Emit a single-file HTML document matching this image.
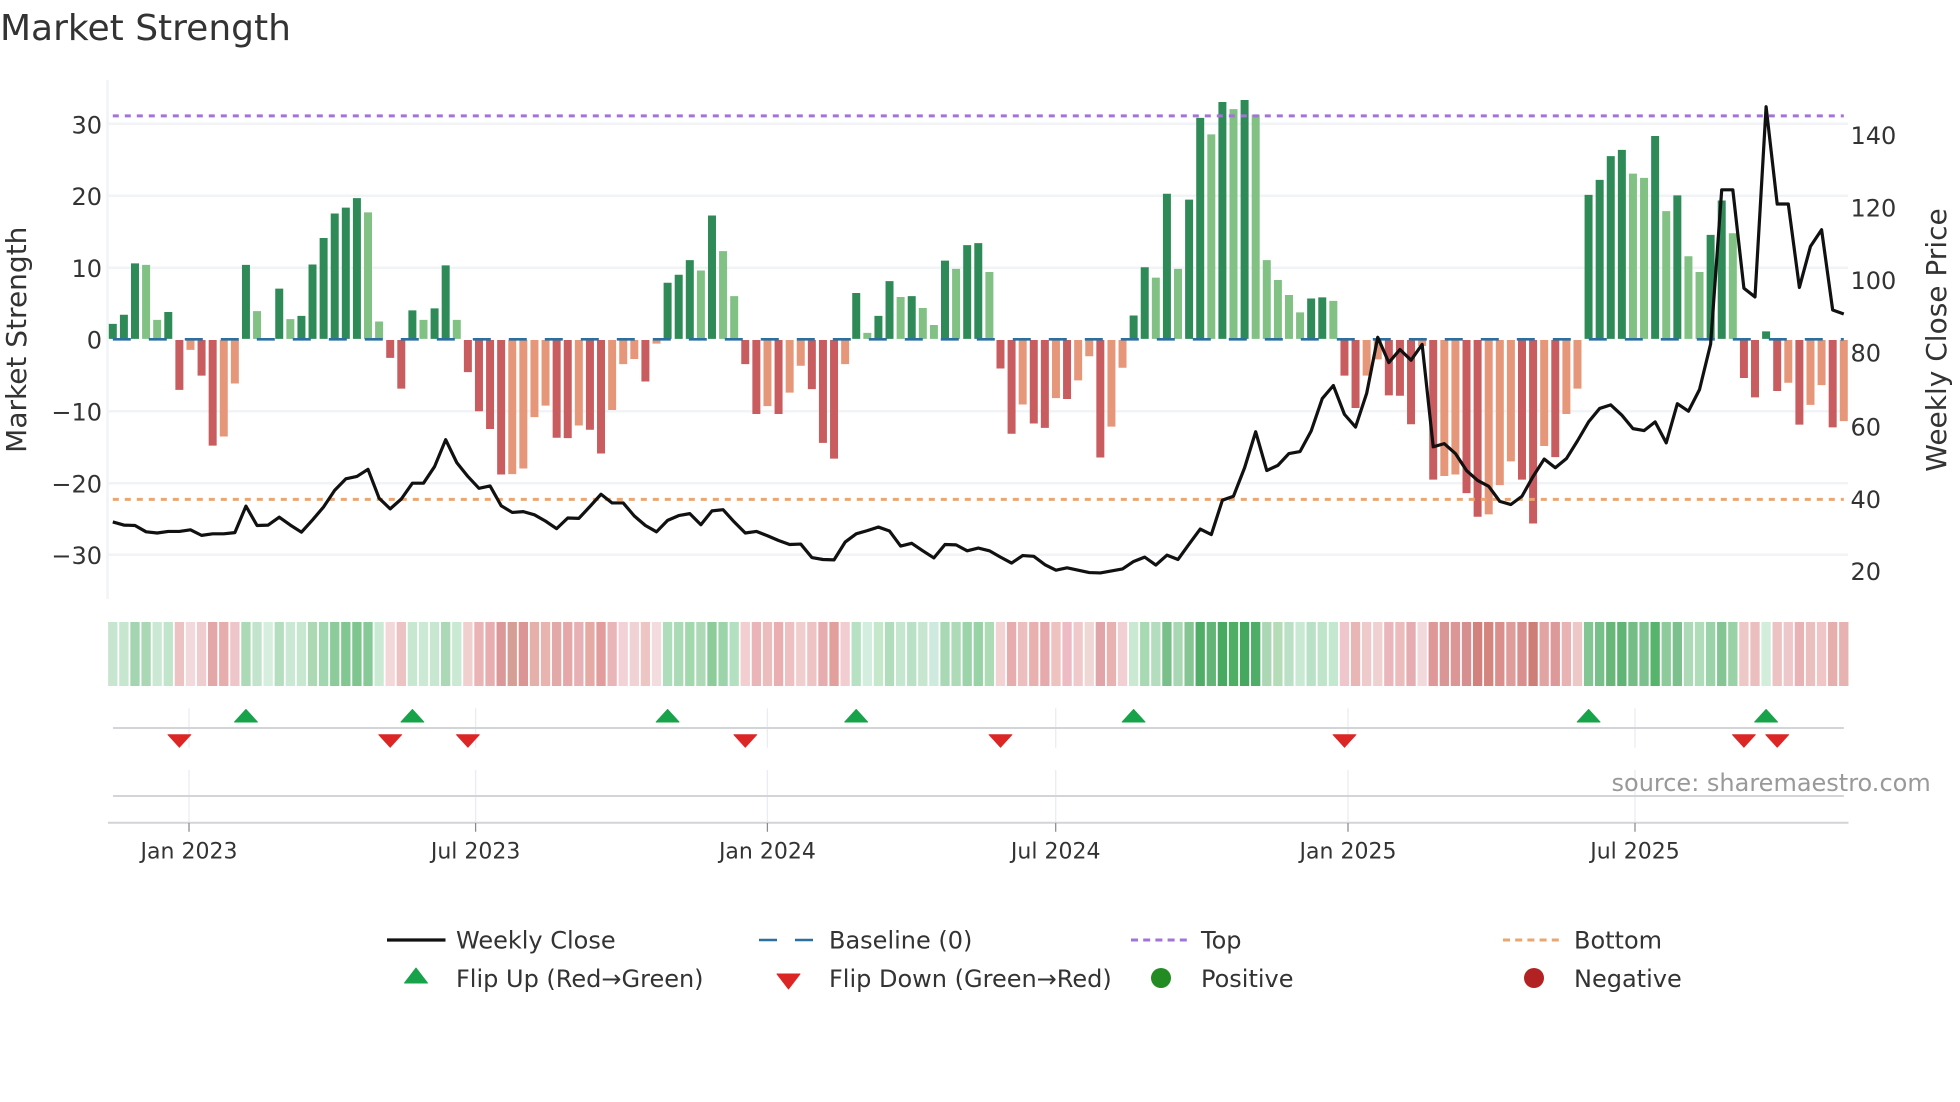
<!DOCTYPE html>
<html><head><meta charset="utf-8"><title>Market Strength</title>
<style>html,body{margin:0;padding:0;background:#fff}svg{display:block}text{font-family:"DejaVu Sans","Liberation Sans",sans-serif;fill:#333}</style></head>
<body>
<svg width="1960" height="1102" viewBox="0 0 1960 1102" xmlns="http://www.w3.org/2000/svg">
<rect width="1960" height="1102" fill="#fff"/>
<text x="0" y="40" font-size="36">Market Strength</text>
<!-- grid -->
<g stroke="#f1f3f6" stroke-width="2.5" fill="none">
<path d="M108 123.8H1848M108 195.7H1848M108 267.7H1848M108 411.2H1848M108 483.2H1848M108 554.8H1848"/>
<path d="M107.5 80V599"/>
</g>
<!-- left ticks -->
<g font-size="24" text-anchor="end">
<text x="102" y="133.3">30</text><text x="102" y="205.2">20</text><text x="102" y="277.2">10</text><text x="102" y="348.4">0</text><text x="102" y="420.3">−10</text><text x="102" y="492.3">−20</text><text x="102" y="563.9">−30</text>
</g>
<g font-size="24">
<text x="1850.5" y="143.9">140</text><text x="1850.5" y="216.3">120</text><text x="1850.5" y="289">100</text><text x="1850.5" y="361.7">80</text><text x="1850.5" y="435.3">60</text><text x="1850.5" y="508.1">40</text><text x="1850.5" y="580.1">20</text>
</g>
<text font-size="28" text-anchor="middle" transform="translate(26 339.7) rotate(-90)">Market Strength</text>
<text font-size="28" text-anchor="middle" transform="translate(1946 340) rotate(-90)">Weekly Close Price</text>
<!-- bars -->
<g transform="translate(112.8 0) scale(11.096 .3954)">
<g transform="translate(-.36 0)">
<path fill="#2e8b57" d="M0 857V819h.72V857zM1 857V796h.72V857zM2 857V666h.72V857zM5 857V789h.72V857zM12 857V670h.72V857zM15 857V730h.72V857zM17 857V799h.72V857zM18 857V669h.72V857zM19 857V602h.72V857zM20 857V540h.72V857zM21 857V525h.72V857zM22 857V501h.72V857zM27 857V785h.72V857zM29 857V780h.72V857zM30 857V671h.72V857zM50 857V715h.72V857zM51 857V695h.72V857zM52 857V658h.72V857zM54 857V545h.72V857zM67 857V741h.72V857zM69 857V799h.72V857zM70 857V711h.72V857zM72 857V749h.72V857zM75 857V659h.72V857zM77 857V620h.72V857zM78 857V615h.72V857zM92 857V798h.72V857zM93 857V676h.72V857zM95 857V490h.72V857zM97 857V505h.72V857zM98 857V298h.72V857zM100 857V258h.72V857zM102 857V253h.72V857zM108 857V755h.72V857zM109 857V752h.72V857zM133 857V493h.72V857zM134 857V455h.72V857zM135 857V395h.72V857zM136 857V379h.72V857zM139 857V344h.72V857zM141 857V494h.72V857zM144 857V594h.72V857zM145 857V507h.72V857zM149 857V838h.72V857z"/>
<path fill="#81c184" d="M3 857V670h.72V857zM4 857V809h.72V857zM13 857V787h.72V857zM16 857V807h.72V857zM23 857V537h.72V857zM24 857V813h.72V857zM28 857V809h.72V857zM31 857V809h.72V857zM53 857V684h.72V857zM55 857V635h.72V857zM56 857V749h.72V857zM68 857V842h.72V857zM71 857V751h.72V857zM73 857V779h.72V857zM74 857V822h.72V857zM76 857V680h.72V857zM79 857V688h.72V857zM94 857V702h.72V857zM96 857V680h.72V857zM99 857V340h.72V857zM101 857V276h.72V857zM103 857V290h.72V857zM104 857V658h.72V857zM105 857V708h.72V857zM106 857V746h.72V857zM107 857V790h.72V857zM110 857V761h.72V857zM137 857V439h.72V857zM138 857V450h.72V857zM140 857V534h.72V857zM142 857V648h.72V857zM143 857V688h.72V857zM146 857V590h.72V857z"/>
<path fill="#c85c5e" d="M6 860V986h.72V860zM8 860V950h.72V860zM9 860V1127h.72V860zM25 860V905h.72V860zM26 860V983h.72V860zM32 860V941h.72V860zM33 860V1040h.72V860zM34 860V1085h.72V860zM35 860V1200h.72V860zM40 860V1107h.72V860zM41 860V1108h.72V860zM43 860V1087h.72V860zM44 860V1147h.72V860zM48 860V965h.72V860zM57 860V921h.72V860zM58 860V1047h.72V860zM60 860V1047h.72V860zM63 860V984h.72V860zM64 860V1120h.72V860zM65 860V1160h.72V860zM80 860V932h.72V860zM81 860V1097h.72V860zM83 860V1071h.72V860zM84 860V1082h.72V860zM86 860V1009h.72V860zM89 860V1157h.72V860zM111 860V950h.72V860zM112 860V1032h.72V860zM115 860V1000h.72V860zM116 860V1001h.72V860zM117 860V1073h.72V860zM119 860V1213h.72V860zM122 860V1247h.72V860zM123 860V1307h.72V860zM127 860V1213h.72V860zM128 860V1324h.72V860zM130 860V1156h.72V860zM147 860V956h.72V860zM148 860V1005h.72V860zM150 860V989h.72V860zM152 860V1074h.72V860zM155 860V1081h.72V860z"/>
<path fill="#e6977a" d="M7 860V885h.72V860zM10 860V1104h.72V860zM11 860V970h.72V860zM36 860V1199h.72V860zM37 860V1185h.72V860zM38 860V1055h.72V860zM39 860V1026h.72V860zM42 860V1076h.72V860zM45 860V1037h.72V860zM46 860V921h.72V860zM47 860V908h.72V860zM49 860V869h.72V860zM59 860V1027h.72V860zM61 860V993h.72V860zM62 860V925h.72V860zM66 860V921h.72V860zM82 860V1023h.72V860zM85 860V1007h.72V860zM87 860V962h.72V860zM88 860V901h.72V860zM90 860V1079h.72V860zM91 860V930h.72V860zM113 860V950h.72V860zM114 860V909h.72V860zM118 860V875h.72V860zM120 860V1204h.72V860zM121 860V1200h.72V860zM124 860V1301h.72V860zM125 860V1227h.72V860zM126 860V1167h.72V860zM129 860V1128h.72V860zM131 860V1047h.72V860zM132 860V983h.72V860zM151 860V968h.72V860zM153 860V1024h.72V860zM154 860V974h.72V860zM156 860V1065h.72V860z"/>
</g>
</g>
<!-- reference lines -->
<path d="M112.8 339.3H1843.8" stroke="#2a6f9f" stroke-width="2.6" stroke-dasharray="18 18" fill="none"/>
<path d="M112.8 115.9H1843.8" stroke="#a273d8" stroke-width="3" stroke-dasharray="6 6" fill="none"/>
<path d="M112.8 499.4H1843.8" stroke="#eba56e" stroke-width="3" stroke-dasharray="6 6" fill="none"/>
<!-- weekly close -->
<g transform="translate(112.8 0) scale(11.096 .3954)">
<polyline fill="none" stroke="#111" stroke-width="3.2" stroke-linejoin="round" vector-effect="non-scaling-stroke" points="0,1320 1,1328 2,1329 3,1345 4,1348 5,1344 6,1344 7,1340 8,1354 9,1350 10,1350 11,1347 12,1280 13,1329 14,1328 15,1308 16,1328 17,1346 18,1315 19,1282 20,1240 21,1211 22,1205 23,1187 24,1260 25,1287 26,1262 27,1222 28,1222 29,1180 30,1112 31,1170 32,1205 33,1235 34,1229 35,1279 36,1296 37,1294 38,1302 39,1318 40,1337 41,1310 42,1311 43,1281 44,1250 45,1272 46,1272 47,1305 48,1329 49,1345 50,1316 51,1304 52,1299 53,1327 54,1292 55,1289 56,1320 57,1348 58,1344 59,1355 60,1367 61,1377 62,1376 63,1410 64,1415 65,1416 66,1371 67,1350 68,1342 69,1333 70,1343 71,1381 72,1374 73,1393 74,1411 75,1377 76,1378 77,1393 78,1386 79,1393 80,1409 81,1424 82,1405 83,1407 84,1428 85,1442 86,1436 87,1442 88,1448 89,1449 90,1444 91,1439 92,1420 93,1409 94,1429 95,1404 96,1415 97,1376 98,1338 99,1352 100,1265 101,1255 102,1183 103,1092 104,1190 105,1177 106,1147 107,1142 108,1090 109,1008 110,975 111,1048 112,1080 113,995 114,853 115,917 116,884 117,911 118,871 119,1130 120,1122 121,1147 122,1190 123,1215 124,1230 125,1268 126,1276 127,1255 128,1205 129,1161 130,1183 131,1160 132,1115 133,1067 134,1033 135,1024 136,1050 137,1084 138,1089 139,1067 140,1120 141,1021 142,1040 143,985 144,870 145,480 146,480 147,729 148,751 149,270 150,516 151,516 152,727 153,623 154,581 155,784 156,794"/>
</g>
<!-- heat strip -->
<g transform="translate(108.14 622) scale(11.096 64)" opacity=".95">
<rect x="0" width=".84" height="1" fill="#c5e4cd"/><rect x="1" width=".84" height="1" fill="#c4e5cd"/><rect x="2" width=".84" height="1" fill="#9fd4ac"/><rect x="3" width=".84" height="1" fill="#a6d5b0"/><rect x="4" width=".84" height="1" fill="#c9e7d2"/><rect x="5" width=".84" height="1" fill="#bee4c9"/><rect x="6" width=".84" height="1" fill="#ecbfc0"/><rect x="7" width=".84" height="1" fill="#f2d8db"/><rect x="8" width=".84" height="1" fill="#efcbcd"/><rect x="9" width=".84" height="1" fill="#e3a3a3"/>
<rect x="10" width=".84" height="1" fill="#e6a9a9"/><rect x="11" width=".84" height="1" fill="#eec4c8"/><rect x="12" width=".84" height="1" fill="#a8d8b3"/><rect x="13" width=".84" height="1" fill="#c0e3ca"/><rect x="14" width=".84" height="1" fill="#d3eedd"/><rect x="15" width=".84" height="1" fill="#b2ddbc"/><rect x="16" width=".84" height="1" fill="#c8e8d2"/><rect x="17" width=".84" height="1" fill="#c6e6cf"/><rect x="18" width=".84" height="1" fill="#a8d6b1"/><rect x="19" width=".84" height="1" fill="#9dd5ab"/>
<rect x="20" width=".84" height="1" fill="#86ca96"/><rect x="21" width=".84" height="1" fill="#7cc48c"/><rect x="22" width=".84" height="1" fill="#78c288"/><rect x="23" width=".84" height="1" fill="#82c892"/><rect x="24" width=".84" height="1" fill="#c9e9d2"/><rect x="25" width=".84" height="1" fill="#f3d6d8"/><rect x="26" width=".84" height="1" fill="#ecbfc0"/><rect x="27" width=".84" height="1" fill="#c5e6cf"/><rect x="28" width=".84" height="1" fill="#c9e8d2"/><rect x="29" width=".84" height="1" fill="#c5e6cf"/>
<rect x="30" width=".84" height="1" fill="#a7d7b2"/><rect x="31" width=".84" height="1" fill="#c7e8d1"/><rect x="32" width=".84" height="1" fill="#f0cdcd"/><rect x="33" width=".84" height="1" fill="#e9b0b0"/><rect x="34" width=".84" height="1" fill="#e6a9ab"/><rect x="35" width=".84" height="1" fill="#da9393"/><rect x="36" width=".84" height="1" fill="#d49a90"/><rect x="37" width=".84" height="1" fill="#db9090"/><rect x="38" width=".84" height="1" fill="#e5aca6"/><rect x="39" width=".84" height="1" fill="#e8b1ac"/>
<rect x="40" width=".84" height="1" fill="#e2a5a5"/><rect x="41" width=".84" height="1" fill="#e4a3a3"/><rect x="42" width=".84" height="1" fill="#e6acb0"/><rect x="43" width=".84" height="1" fill="#e4a6a0"/><rect x="44" width=".84" height="1" fill="#e09796"/><rect x="45" width=".84" height="1" fill="#e8b2b5"/><rect x="46" width=".84" height="1" fill="#f2d0d5"/><rect x="47" width=".84" height="1" fill="#f1d0d2"/><rect x="48" width=".84" height="1" fill="#edc3c0"/><rect x="49" width=".84" height="1" fill="#f3dbdd"/>
<rect x="50" width=".84" height="1" fill="#aadcb8"/><rect x="51" width=".84" height="1" fill="#a7d9b3"/><rect x="52" width=".84" height="1" fill="#9cd6a8"/><rect x="53" width=".84" height="1" fill="#a9d8b4"/><rect x="54" width=".84" height="1" fill="#85ca94"/><rect x="55" width=".84" height="1" fill="#97d2a5"/><rect x="56" width=".84" height="1" fill="#afdfbd"/><rect x="57" width=".84" height="1" fill="#f3cccf"/><rect x="58" width=".84" height="1" fill="#e9b0b6"/><rect x="59" width=".84" height="1" fill="#ecbaba"/>
<rect x="60" width=".84" height="1" fill="#e9a9ac"/><rect x="61" width=".84" height="1" fill="#eebdbe"/><rect x="62" width=".84" height="1" fill="#f1cccc"/><rect x="63" width=".84" height="1" fill="#eec0c0"/><rect x="64" width=".84" height="1" fill="#e5a8aa"/><rect x="65" width=".84" height="1" fill="#e19a97"/><rect x="66" width=".84" height="1" fill="#f1cbd0"/><rect x="67" width=".84" height="1" fill="#b3e0c0"/><rect x="68" width=".84" height="1" fill="#d1eedd"/><rect x="69" width=".84" height="1" fill="#c2e6c8"/>
<rect x="70" width=".84" height="1" fill="#aedcb9"/><rect x="71" width=".84" height="1" fill="#c2e6cd"/><rect x="72" width=".84" height="1" fill="#b6e0c2"/><rect x="73" width=".84" height="1" fill="#c3e5cd"/><rect x="74" width=".84" height="1" fill="#cce9dd"/><rect x="75" width=".84" height="1" fill="#a5d7b0"/><rect x="76" width=".84" height="1" fill="#aadab4"/><rect x="77" width=".84" height="1" fill="#96d2a5"/><rect x="78" width=".84" height="1" fill="#93d1a2"/><rect x="79" width=".84" height="1" fill="#a8dab3"/>
<rect x="80" width=".84" height="1" fill="#f2d0d0"/><rect x="81" width=".84" height="1" fill="#e6a9aa"/><rect x="82" width=".84" height="1" fill="#ecbbbb"/><rect x="83" width=".84" height="1" fill="#e8acac"/><rect x="84" width=".84" height="1" fill="#e6a6a8"/><rect x="85" width=".84" height="1" fill="#eebfbc"/><rect x="86" width=".84" height="1" fill="#ebb8c0"/><rect x="87" width=".84" height="1" fill="#f0c8c8"/><rect x="88" width=".84" height="1" fill="#efd6d2"/><rect x="89" width=".84" height="1" fill="#dfa0a5"/>
<rect x="90" width=".84" height="1" fill="#e6aeab"/><rect x="91" width=".84" height="1" fill="#f1cdd0"/><rect x="92" width=".84" height="1" fill="#c8e8d0"/><rect x="93" width=".84" height="1" fill="#a3d8ae"/><rect x="94" width=".84" height="1" fill="#b1dcbb"/><rect x="95" width=".84" height="1" fill="#71bc84"/><rect x="96" width=".84" height="1" fill="#a3d6af"/><rect x="97" width=".84" height="1" fill="#7fc28f"/><rect x="98" width=".84" height="1" fill="#47a95f"/><rect x="99" width=".84" height="1" fill="#5ab26f"/>
<rect x="100" width=".84" height="1" fill="#3fa559"/><rect x="101" width=".84" height="1" fill="#45aa5b"/><rect x="102" width=".84" height="1" fill="#3aa556"/><rect x="103" width=".84" height="1" fill="#45a95f"/><rect x="104" width=".84" height="1" fill="#a7d5b1"/><rect x="105" width=".84" height="1" fill="#b0dcb4"/><rect x="106" width=".84" height="1" fill="#b7e0c3"/><rect x="107" width=".84" height="1" fill="#c6e9d3"/><rect x="108" width=".84" height="1" fill="#b5e0c2"/><rect x="109" width=".84" height="1" fill="#bbe3c7"/>
<rect x="110" width=".84" height="1" fill="#c0e6cd"/><rect x="111" width=".84" height="1" fill="#eec3c9"/><rect x="112" width=".84" height="1" fill="#e8b3b3"/><rect x="113" width=".84" height="1" fill="#efc8c8"/><rect x="114" width=".84" height="1" fill="#f0cfcf"/><rect x="115" width=".84" height="1" fill="#e9b3b8"/><rect x="116" width=".84" height="1" fill="#ebb8b8"/><rect x="117" width=".84" height="1" fill="#e4a8ad"/><rect x="118" width=".84" height="1" fill="#f2d8da"/><rect x="119" width=".84" height="1" fill="#de9292"/>
<rect x="120" width=".84" height="1" fill="#d99090"/><rect x="121" width=".84" height="1" fill="#dc9191"/><rect x="122" width=".84" height="1" fill="#d58988"/><rect x="123" width=".84" height="1" fill="#d07b75"/><rect x="124" width=".84" height="1" fill="#d27f78"/><rect x="125" width=".84" height="1" fill="#d98a86"/><rect x="126" width=".84" height="1" fill="#dd9796"/><rect x="127" width=".84" height="1" fill="#d98a8a"/><rect x="128" width=".84" height="1" fill="#cb7870"/><rect x="129" width=".84" height="1" fill="#e0a09f"/>
<rect x="130" width=".84" height="1" fill="#dc9494"/><rect x="131" width=".84" height="1" fill="#e8afb0"/><rect x="132" width=".84" height="1" fill="#eec5c5"/><rect x="133" width=".84" height="1" fill="#7dc48e"/><rect x="134" width=".84" height="1" fill="#70bd83"/><rect x="135" width=".84" height="1" fill="#60b472"/><rect x="136" width=".84" height="1" fill="#58b26e"/><rect x="137" width=".84" height="1" fill="#6dba81"/><rect x="138" width=".84" height="1" fill="#75be87"/><rect x="139" width=".84" height="1" fill="#4fb066"/>
<rect x="140" width=".84" height="1" fill="#87c996"/><rect x="141" width=".84" height="1" fill="#75bd87"/><rect x="142" width=".84" height="1" fill="#a8d9b3"/><rect x="143" width=".84" height="1" fill="#abdbb6"/><rect x="144" width=".84" height="1" fill="#95d1a3"/><rect x="145" width=".84" height="1" fill="#7dc48e"/><rect x="146" width=".84" height="1" fill="#94d0a2"/><rect x="147" width=".84" height="1" fill="#eec5c5"/><rect x="148" width=".84" height="1" fill="#ebbcbc"/><rect x="149" width=".84" height="1" fill="#d0eeda"/>
<rect x="150" width=".84" height="1" fill="#ecbfbf"/><rect x="151" width=".84" height="1" fill="#eec5c8"/><rect x="152" width=".84" height="1" fill="#e8aeb0"/><rect x="153" width=".84" height="1" fill="#ecbcbc"/><rect x="154" width=".84" height="1" fill="#efc2c2"/><rect x="155" width=".84" height="1" fill="#e6aaaa"/><rect x="156" width=".84" height="1" fill="#e6aeae"/>
</g>
<!-- lower panel -->
<g stroke="#e9ecf1" stroke-width="1.25" fill="none">
<path d="M189 708.3V747.7M189 770V822M475.6 708.3V747.7M475.6 770V822M767.4 708.3V747.7M767.4 770V822M1055.7 708.3V747.7M1055.7 770V822M1348 708.3V747.7M1348 770V822M1635 708.3V747.7M1635 770V822"/>
</g>
<path d="M113 728H1843.8M113 796H1843.8M108 822.7H1848.5" stroke="#d2d4d8" stroke-width="2" fill="none"/>
<path d="M189 823V831.7M475.6 823V831.7M767.4 823V831.7M1055.7 823V831.7M1348 823V831.7M1635 823V831.7" stroke="#8a8a8a" stroke-width="1.25" fill="none"/>
<g fill="#16a34a" stroke="#16a34a" stroke-width="1" stroke-linejoin="round">
<path transform="translate(245.95 709.5)" d="M0 0L11.4 12.5H-11.4Z"/><path transform="translate(412.4 709.5)" d="M0 0L11.4 12.5H-11.4Z"/><path transform="translate(667.6 709.5)" d="M0 0L11.4 12.5H-11.4Z"/><path transform="translate(856.2 709.5)" d="M0 0L11.4 12.5H-11.4Z"/><path transform="translate(1133.6 709.5)" d="M0 0L11.4 12.5H-11.4Z"/><path transform="translate(1588.6 709.5)" d="M0 0L11.4 12.5H-11.4Z"/><path transform="translate(1766.1 709.5)" d="M0 0L11.4 12.5H-11.4Z"/>
</g>
<g fill="#dc2626" stroke="#dc2626" stroke-width="1" stroke-linejoin="round">
<path transform="translate(179.4 747.2)" d="M0 0L11.4 -12.5H-11.4Z"/><path transform="translate(390.2 747.2)" d="M0 0L11.4 -12.5H-11.4Z"/><path transform="translate(467.9 747.2)" d="M0 0L11.4 -12.5H-11.4Z"/><path transform="translate(745.3 747.2)" d="M0 0L11.4 -12.5H-11.4Z"/><path transform="translate(1000.5 747.2)" d="M0 0L11.4 -12.5H-11.4Z"/><path transform="translate(1344.5 747.2)" d="M0 0L11.4 -12.5H-11.4Z"/><path transform="translate(1743.9 747.2)" d="M0 0L11.4 -12.5H-11.4Z"/><path transform="translate(1777.2 747.2)" d="M0 0L11.4 -12.5H-11.4Z"/>
</g>
<text x="1611.5" y="791" font-size="24" style="fill:#999">source: sharemaestro.com</text>
<g font-size="22" text-anchor="middle">
<text x="189" y="858.5">Jan 2023</text><text x="475.6" y="858.5">Jul 2023</text><text x="767.4" y="858.5">Jan 2024</text><text x="1055.7" y="858.5">Jul 2024</text><text x="1348" y="858.5">Jan 2025</text><text x="1635" y="858.5">Jul 2025</text>
</g>
<!-- legend -->
<path d="M387 940H445.5" stroke="#111" stroke-width="3.2"/>
<path d="M759 940H777M795 940H813" stroke="#2a6f9f" stroke-width="2.6"/>
<path d="M1131 940H1187" stroke="#a273d8" stroke-width="3" stroke-dasharray="7 5.2"/>
<path d="M1503 940H1559" stroke="#eba56e" stroke-width="3" stroke-dasharray="7 5.2"/>
<path d="M416 968L427.5 983H404.5Z" fill="#16a34a" stroke="#16a34a" stroke-linejoin="round"/>
<path d="M788.5 989L800 974H777Z" fill="#dc2626" stroke="#dc2626" stroke-linejoin="round"/>
<circle cx="1161" cy="978" r="10" fill="#228b22"/>
<circle cx="1534" cy="978" r="10" fill="#b22222"/>
<g font-size="24">
<text x="456" y="948.5">Weekly Close</text><text x="829" y="948.5">Baseline (0)</text><text x="1201" y="948.5">Top</text><text x="1574" y="948.5">Bottom</text>
<text x="456" y="987">Flip Up (Red→Green)</text><text x="829" y="987">Flip Down (Green→Red)</text><text x="1201" y="987">Positive</text><text x="1574" y="987">Negative</text>
</g>
</svg>
</body></html>
